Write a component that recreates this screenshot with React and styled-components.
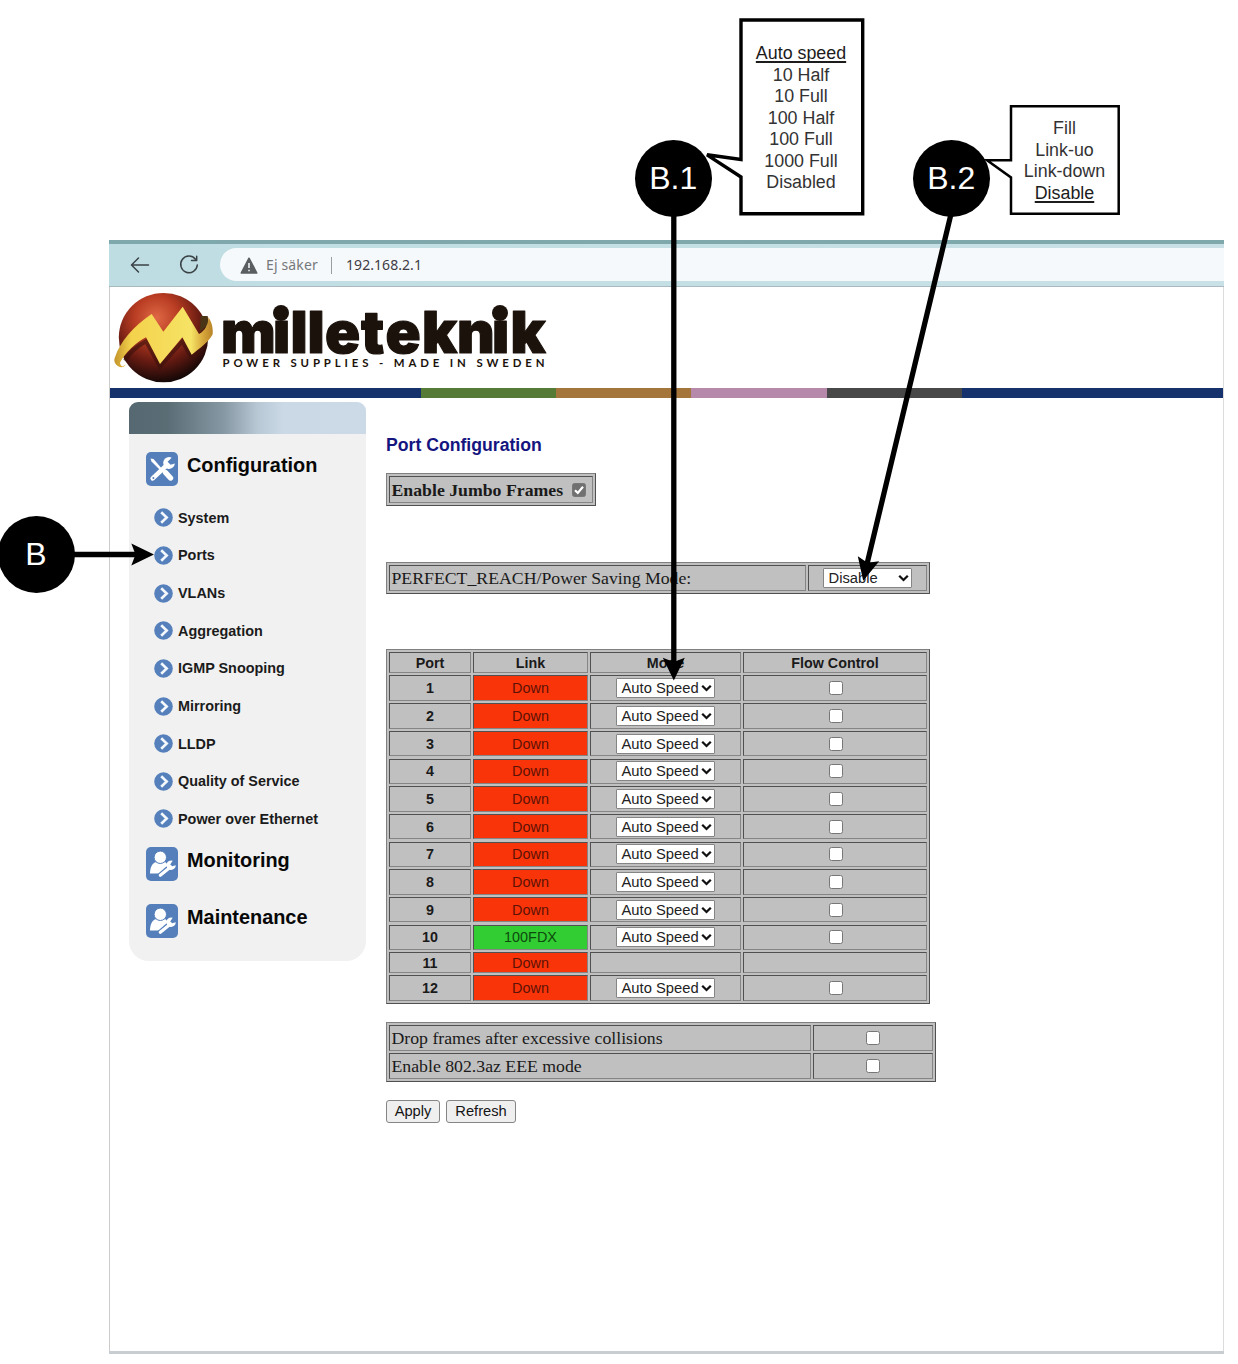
import React from "react";
import styled, { createGlobalStyle } from "styled-components";

const GlobalStyle = createGlobalStyle`
  *, *::before, *::after { box-sizing: border-box; }
  body { margin: 0; background: #fff; }
`;

const SANS = '"Liberation Sans", Arial, sans-serif';
const SERIF = '"Liberation Serif", "Times New Roman", serif';

const Sheet = styled.div`
  position: relative;
  width: 1238px;
  height: 1364px;
  overflow: hidden;
  padding: 240px 14px 10px 109px;
  background: #fff;
  font-family: ${SANS};
  color: #111;
`;

const Window = styled.main`
  display: flex;
  flex-direction: column;
  height: 1114px;
  border-top: 4px solid #7fa8ad;
  border-bottom: 3px solid #c8cdd1;
`;

const BrowserBar = styled.header`
  display: flex;
  align-items: center;
  height: 43px;
  padding-left: 20px;
  border-bottom: 1px solid #a9b9bf;
  background: linear-gradient(90deg, #bedde2 0, #c5e0e5 60%, #c9e0e6 100%);
`;

const NavIcon = styled.svg`
  display: block;
  width: 22px;
  height: 22px;
  margin-right: 27px;
  fill: none;
  stroke: #3b4347;
  stroke-width: 1.5;
  stroke-linecap: round;
  stroke-linejoin: round;
`;

const AddressBar = styled.div`
  display: flex;
  align-items: center;
  flex: 1;
  height: 33px;
  margin-left: -7px;
  margin-top: -1px;
  padding: 1px 0 0 20px;
  border-radius: 17px 0 0 17px;
  background: #f5f9fc;
  font: 14px/20px "Noto Sans", "Open Sans", sans-serif;
`;

const Insecure = styled.span`
  width: 55px;
  margin-left: 8px;
  color: #75787a;
  white-space: nowrap;
  letter-spacing: 0.15px;
`;

const Divider = styled.span`
  width: 1px;
  height: 17px;
  margin: 0 14px 0 10px;
  background: #9a9ea1;
`;

const Url = styled.span`
  color: #403c43;
  letter-spacing: 0.06px;
`;

const Page = styled.div`
  flex: 1;
  border-left: 1px solid #ccc;
  border-right: 1px solid #dcdcdc;
`;

const Banner = styled.div`
  height: 101px;
`;

const Logo = styled.svg`
  display: block;
  width: 450px;
  height: 101px;
`;

const Stripe = styled.div`
  display: grid;
  grid-template-columns: 311px 135px 135px 136px 135px 1fr;
  height: 10px;
`;

const StripePart = styled.i`
  background: ${(p) => p.$color};
`;

const Body = styled.div`
  display: flex;
  gap: 20px;
  padding: 4px 0 0 19px;
`;

const Sidebar = styled.nav`
  width: 237px;
  height: 559px;
  border-radius: 9px 9px 20px 20px;
  background: #f1f1f1;
  overflow: hidden;
`;

const SidebarTop = styled.div`
  height: 32px;
  background: linear-gradient(90deg, #566871 0%, #5a6c74 16%, #8698a3 40%, #b7c7d4 54%, #cbd9e7 65%, #ccdae8 100%);
`;

const Section = styled.div`
  display: flex;
  align-items: flex-start;
  gap: 9px;
  height: 34px;
  margin: ${(p) => p.$top}px 0 0 17px;
`;

const SectionTitle = styled.span`
  font: bold 19.9px/28px ${SANS};
  color: #080808;
  margin-top: -1px;
`;

const SectionIcon = styled.svg`
  display: block;
  width: 32px;
  height: 34px;
`;

const Menu = styled.div`
  display: flex;
  flex-direction: column;
  padding: 13px 0 0 25px;
`;

const MenuItem = styled.a`
  display: flex;
  align-items: center;
  gap: 5px;
  height: 37.65px;
  font: bold 14.4px/20px ${SANS};
  color: #1b1b1b;
`;

const Content = styled.section`
  display: flex;
  flex-direction: column;
  align-items: flex-start;
`;

const Title = styled.h1`
  margin: 32px 0 0;
  font: bold 17.65px/22px ${SANS};
  color: #151580;
`;

const Table = styled.div`
  display: grid;
  grid-template-columns: ${(p) => p.$cols};
  grid-template-rows: ${(p) => p.$rows};
  gap: 2.2px 2px;
  margin-top: ${(p) => p.$top}px;
  padding: 2px;
  border: 1px solid;
  border-color: #808080 #505050 #505050 #808080;
  background: #c0c0c0;
`;

const fills = { down: "#fa3409", up: "#32cd32" };

const Cell = styled.div`
  display: flex;
  align-items: center;
  justify-content: ${(p) => (p.$left ? "flex-start" : "center")};
  min-width: 0;
  padding-left: ${(p) => (p.$left ? "1.5px" : "0")};
  border: 1px solid;
  border-color: #505050 #858585 #858585 #505050;
  background: ${(p) => fills[p.$state] || "#c0c0c0"};
  color: ${(p) => (p.$state === "down" ? "#5c1206" : p.$state === "up" ? "#0d4a0d" : "#1a1a1a")};
  font-family: ${(p) => (p.$serif ? SERIF : SANS)};
  font-size: ${(p) => (p.$serif ? "17.76px" : p.$state ? "14.4px" : "14.3px")};
  font-weight: ${(p) => (p.$bold ? "bold" : "normal")};
  line-height: 18px;
  white-space: nowrap;
`;

const SelectBox = styled.span`
  display: flex;
  align-items: center;
  justify-content: space-between;
  width: ${(p) => p.$width}px;
  height: 20px;
  padding: 0 2px 0 4.5px;
  border: 1px solid #858585;
  border-radius: 1px;
  background: #fff;
  color: #222;
  font: 14.75px/18px ${SANS};
`;

const Check = styled.span`
  display: flex;
  width: 14px;
  height: 14px;
  margin-left: ${(p) => (p.$checked ? "9px" : p.$flush ? "0" : "1px")};
  border: 1px solid #777;
  border-radius: 2.5px;
  background: ${(p) => (p.$checked ? "#707070" : "#fff")};
`;

const Buttons = styled.div`
  display: flex;
  gap: 6px;
  margin-top: 18px;
`;

const Button = styled.button`
  width: ${(p) => p.$width}px;
  height: 23px;
  padding: 0;
  border: 1px solid #858585;
  border-radius: 3px;
  background: #efefef;
  color: #151515;
  font: 14.7px/20px ${SANS};
`;

const Overlay = styled.svg`
  position: absolute;
  inset: 0;
  width: 1238px;
  height: 1364px;
  pointer-events: none;
`;

const Marker = styled.div`
  position: absolute;
  left: ${(p) => p.$x - 38.5}px;
  top: ${(p) => p.$y - 38.5}px;
  display: flex;
  align-items: center;
  justify-content: center;
  width: 77px;
  height: 77px;
  padding: 0 1px 1px 0;
  border-radius: 50%;
  background: #000;
  color: #fff;
  font: 32px/36px ${SANS};
`;

const Note = styled.div`
  position: absolute;
  left: ${(p) => p.$x}px;
  top: ${(p) => p.$y}px;
  width: ${(p) => p.$width}px;
  display: flex;
  flex-direction: column;
  align-items: center;
  font: 17.85px/21.5px ${SANS};
  color: #333;
`;

const NoteLine = styled.span`
  text-decoration: ${(p) => (p.$current ? "underline" : "none")};
  text-decoration-thickness: 1.5px;
  text-decoration-skip-ink: none;
  text-underline-offset: 2px;
  color: ${(p) => (p.$current ? "#1c1c1c" : "inherit")};
`;

const Warning = () => (
  <svg width="18" height="17" viewBox="0 0 18 17">
    <path d="M9 1.2 16.8 16H1.2Z" fill="#5b5e60" stroke="#5b5e60" strokeWidth="1.5" strokeLinejoin="round" />
    <path d="M9 6v5M9 12.7v1.6" stroke="#eef2f4" strokeWidth="1.6" />
  </svg>
);

const Bullet = () => (
  <svg width="19" height="19" viewBox="0 0 19 19">
    <circle cx="9.5" cy="9.5" r="9.3" fill="#5580bb" />
    <path d="M7.2 4.2 12.7 9.5 7.2 14.8" fill="none" stroke="#f4f8fd" strokeWidth="2.6" />
  </svg>
);

const Chevron = () => (
  <svg width="11" height="8" viewBox="0 0 11 8">
    <path d="M1.2 1.8 5.5 6 9.8 1.8" fill="none" stroke="#111" strokeWidth="2.3" />
  </svg>
);

const ToolsIcon = () => (
  <SectionIcon viewBox="0 0 32 34">
    <rect width="32" height="34" rx="5" fill="#547fba" />
    <path d="M4.5 6.5 7.5 7 17.5 18.5 16 20 5.5 9.5Z" fill="#fff" />
    <path d="M19.5 20.5 24.5 26" stroke="#fff" strokeWidth="5.4" strokeLinecap="round" />
    <path d="M6.7 26.4 20.5 13.5" stroke="#fff" strokeWidth="4.6" strokeLinecap="round" />
    <path d="M25.7 5.7A5.9 5.9 0 1 0 28.9 11.6l-4.3 1.2-3-3Z" fill="#fff" />
    <circle cx="7.4" cy="25.9" r="1" fill="#547fba" />
  </SectionIcon>
);

const PersonIcon = () => (
  <SectionIcon viewBox="0 0 32 34">
    <rect width="32" height="34" rx="5" fill="#547fba" />
    <path d="M4 26.5C4 20.5 6 16.5 9.5 15.2h10L23 19l-8.5 7.5Z" fill="#fff" />
    <circle cx="14.3" cy="10.3" r="6.2" fill="#fff" stroke="#547fba" strokeWidth="1" />
    <path d="M13 29.8 25 19.5" stroke="#547fba" strokeWidth="6" />
    <path d="M14.3 28.3 24.5 20" stroke="#fff" strokeWidth="3.2" strokeLinecap="round" />
    <path d="M26.7 13.8A4.7 4.7 0 1 0 29.8 18.3l-3.7 1-1.9-1.8Z" fill="#fff" />
  </SectionIcon>
);

const BrandLogo = () => (
  <Logo viewBox="110 287 450 101">
    <defs>
      <radialGradient id="ball" cx="42%" cy="28%" r="72%">
        <stop offset="0" stopColor="#df6845" />
        <stop offset=".35" stopColor="#b83c22" />
        <stop offset=".68" stopColor="#681b12" />
        <stop offset="1" stopColor="#160807" />
      </radialGradient>
      <linearGradient id="ribbon" x1="0" x2="1">
        <stop offset="0" stopColor="#c3942b" />
        <stop offset=".17" stopColor="#f4d24c" />
        <stop offset=".78" stopColor="#f6e365" />
        <stop offset=".9" stopColor="#d7a83b" />
        <stop offset="1" stopColor="#b88227" />
      </linearGradient>
    </defs>
    <circle cx="163.5" cy="337.6" r="44.7" fill="url(#ball)" />
    <g transform="translate(100 230) scale(.33333)">
      <path d="M75 392Q95 358 138 334L180 410 247 334 274 382" fill="none" stroke="#39100c" strokeOpacity=".6" strokeWidth="12" />
      <path d="M302 258 323 258 326 282 300 305Z" fill="#4b3517" />
      <path d="M45 382C60 335 100 289 155 252L190 305 248 230 297 312C315 303 325 285 325 262 335 275 340 295 338 313 325 337 300 355 275 374L247 322 180 402 138 322C110 335 75 370 60 398 62 411 70 411 77 403 72 416 54 413 47 402 42 395 42 389 45 382Z" fill="url(#ribbon)" />
    </g>
    <g fill="#1b120b">
      <text
        x="221 273 290.5 307.5 325 361 385.5 422 457 492 510.5"
        y="353.2"
        fontFamily="Inter, sans-serif"
        fontWeight="900"
        fontSize="58"
        stroke="#1b120b"
        strokeWidth="1.2"
        strokeLinejoin="round"
      >
        milleteknik
      </text>
      <circle cx="281" cy="313" r="8" />
      <circle cx="500" cy="313" r="8" />
      <text x="222.5" y="366.6" fontFamily="Lato, sans-serif" fontWeight="700" fontSize="11.4" textLength="322" lengthAdjust="spacing">POWER SUPPLIES - MADE IN SWEDEN</text>
    </g>
  </Logo>
);

const Select = ({ width, children }) => (
  <SelectBox $width={width}>{children}<Chevron /></SelectBox>
);

const stripe = ["#15326d", "#567b36", "#a5763c", "#b688aa", "#484848", "#15326d"];
const menu = ["System", "Ports", "VLANs", "Aggregation", "IGMP Snooping", "Mirroring", "LLDP", "Quality of Service", "Power over Ethernet"];
const ports = Array.from({ length: 12 }, (_, i) => ({ id: i + 1, up: i === 9, editable: i !== 10 }));
const speeds = ["Auto speed", "10 Half", "10 Full", "100 Half", "100 Full", "1000 Full", "Disabled"];
const savingModes = ["Fill", "Link-uo", "Link-down", "Disable"];

export default function App() {
  return (
    <Sheet>
      <GlobalStyle />
      <Window>
        <BrowserBar>
          <NavIcon viewBox="0 0 22 22"><path d="M19.5 11H3M9.5 4 2.5 11l7 7" /></NavIcon>
          <NavIcon viewBox="0 0 22 22"><path d="M17.5 5.2A8.3 8.3 0 1 0 19.3 11M18.7 2.2v4.3h-5.2" /></NavIcon>
          <AddressBar>
            <Warning />
            <Insecure>Ej säker</Insecure>
            <Divider />
            <Url>192.168.2.1</Url>
          </AddressBar>
        </BrowserBar>
        <Page>
          <Banner><BrandLogo /></Banner>
          <Stripe>{stripe.map((c, i) => <StripePart key={i} $color={c} />)}</Stripe>
          <Body>
            <Sidebar>
              <SidebarTop />
              <Section $top={18}><ToolsIcon /><SectionTitle>Configuration</SectionTitle></Section>
              <Menu>{menu.map((m) => <MenuItem key={m}><Bullet />{m}</MenuItem>)}</Menu>
              <Section $top={9.5}><PersonIcon /><SectionTitle>Monitoring</SectionTitle></Section>
              <Section $top={22.5}><PersonIcon /><SectionTitle>Maintenance</SectionTitle></Section>
            </Sidebar>
            <Content>
              <Title>Port Configuration</Title>
              <Table $cols="203.5px" $rows="27px" $top={17}>
                <Cell $left $serif $bold>
                  Enable Jumbo Frames
                  <Check $checked>
                    <svg width="12" height="12" viewBox="0 0 12 12"><path d="M2 6.3 4.8 9 10 2.8" fill="none" stroke="#fff" strokeWidth="2.2" /></svg>
                  </Check>
                </Cell>
              </Table>
              <Table $cols="417px 119px" $rows="26.5px" $top={55.5}>
                <Cell $left $serif>PERFECT_REACH/Power Saving Mode:</Cell>
                <Cell><Select width={89}>Disable</Select></Cell>
              </Table>
              <Table $cols="82px 115px 151px 184px" $rows="21.3px repeat(10, 25.5px) 20.8px 25.5px" $top={55}>
                {["Port", "Link", "Mode", "Flow Control"].map((h) => <Cell key={h} $bold>{h}</Cell>)}
                {ports.map((p) => (
                  <React.Fragment key={p.id}>
                    <Cell $bold>{p.id}</Cell>
                    <Cell $state={p.up ? "up" : "down"}>{p.up ? "100FDX" : "Down"}</Cell>
                    <Cell>{p.editable && <Select width={99}>Auto Speed</Select>}</Cell>
                    <Cell>{p.editable && <Check />}</Cell>
                  </React.Fragment>
                ))}
              </Table>
              <Table $cols="422px 120px" $rows="25.6px 25.6px" $top={18.5}>
                <Cell $left $serif>Drop frames after excessive collisions</Cell>
                <Cell><Check $flush /></Cell>
                <Cell $left $serif>Enable 802.3az EEE mode</Cell>
                <Cell><Check $flush /></Cell>
              </Table>
              <Buttons>
                <Button $width={54}>Apply</Button>
                <Button $width={70}>Refresh</Button>
              </Buttons>
            </Content>
          </Body>
        </Page>
      </Window>
      <Marker $x={36.5} $y={554.5}>B</Marker>
      <Marker $x={673.7} $y={178}>B.1</Marker>
      <Marker $x={951.7} $y={178}>B.2</Marker>
      <Overlay viewBox="0 0 1238 1364">
        <path d="M741 20H862.7V213.7H741V177L707 154.8 741 159.5Z" fill="#fff" stroke="#000" strokeWidth="3.4" />
        <path d="M1011 106.3H1118.7V213.8H1011V177.5L987 160.3H1011Z" fill="#fff" stroke="#000" strokeWidth="2.5" />
        <path d="M673.8 214V664M951 214 867 564M73 554.5H138" stroke="#000" strokeWidth="5.3" fill="none" />
        <path d="M673.8 680.5 662.8 657.8 673.8 662 684.8 657.8Z" />
        <path d="M0 0-11-22.7 0-18.5 11-22.7Z" transform="translate(863.2 580.8) rotate(13.5)" />
        <path d="M0 0-11-22.7 0-18.5 11-22.7Z" transform="translate(154 554.5) rotate(-90)" />
      </Overlay>
      <Note $x={740} $y={43} $width={122}>
        {speeds.map((s, i) => <NoteLine key={s} $current={i === 0}>{s}</NoteLine>)}
      </Note>
      <Note $x={1010} $y={118} $width={109}>
        {savingModes.map((s, i) => <NoteLine key={s} $current={i === 3}>{s}</NoteLine>)}
      </Note>
    </Sheet>
  );
}
